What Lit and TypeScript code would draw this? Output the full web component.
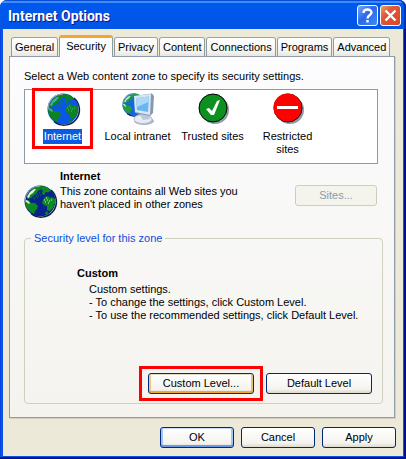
import { LitElement, html, css, svg } from "lit";
import { customElement, property } from "lit/decorators.js";
import { classMap } from "lit/directives/class-map.js";

const tabs = ["General", "Security", "Privacy", "Content", "Connections", "Programs", "Advanced"];

const zones = [
  { icon: "internet", label: "Internet", selected: true },
  { icon: "intranet", label: "Local intranet", selected: false },
  { icon: "trusted", label: "Trusted sites", selected: false },
  { icon: "restricted", label: "Restricted sites", selected: false },
];

const globe = (sea: string, land: string, lit: string) => svg`
  <circle cx="16" cy="16" r="15.500" fill=${sea}/>
  <path d="M3 10L6 6 10 3 15 1 18 1 17 4 14 6 12 9 9 11 7 13 3 14z" fill=${land}/>
  <path d="M18 1L23 2 27 6 26 8 22 7 20 10 17 9 19 6 17 4z" fill=${land}/>
  <path d="M12 10l3-3 3 1 1 3-3 2-2 3-3-2z" fill=${sea}/>
  <path d="M13 9h1M15 8h1M12 11h1M14 11h1M16 10h1M13 13h1M11 12h1M9 13h1M10 14h1" stroke=${land}/>
  <path d="M1 16L5 15 7 18 11 18 14 21 13 24 11 26 10 29C5 27 1 22 1 17z" fill=${land}/>
  <path d="M3 12l3-5 4-3 2 0-3 4-3 2-1 3z" fill=${lit}/>
  <path d="M1 16l2-1 3 3-1 1z" fill=${lit}/>
  <path d="M26 6l3 4 1 4-3-2-3-4z" fill=${sea}/>
  <path d="M19 15L21 12 24 11 26 13 28 12 31 14 31 18 29 23 26 26 23 25 23 21 20 20 18 18z" fill=${land}/>
  <path d="M20 15h1M22 13h1M23 15h1M21 17h1M25 16h1M27 15h1M24 18h1" stroke=${lit}/>
  <path d="M21 28l2-2 1 2-2 2z" fill=${land}/>
  <path d="M1 16A15 15 0 0 1 16 1" fill="none" stroke="#9fb2b8" stroke-width="1"/>
  <path d="M27 5A15 15 0 0 1 7 28.500" fill="none" stroke="#082048" stroke-width="1.500"/>`;

const icons: Record<string, unknown> = {
  internet: globe("#0a56e8", "#0c8420", "#4eb0a0"),
  zone: globe("#08248c", "#0c8a20", "#e0f2e4"),
  intranet: svg`
    <g transform="scale(.72)">${globe("#1468dc", "#269c3c", "#b8e8ea")}</g>
    <ellipse cx="22" cy="28" rx="10" ry="4" fill="#aab4c4"/>
    <ellipse cx="21" cy="26" rx="9" ry="4.500" fill="#e9edf3" stroke="#b5c1d2"/>
    <path d="M18 22l9-1 1 5-7 1z" fill="#bcc9da"/>
    <path d="M12 3L30 0.500 32 3 31 20 28 23 13 20z" fill="#8798b4"/>
    <path d="M12 3L29 1 28 22 13 19z" fill="#d9e7f4"/>
    <path d="M14 5L27 3.500 26 19 15 17z" fill="#69b6ee"/>
    <path d="M14 5L27 3.500 26.500 9 15 14z" fill="#a9dafa"/>`,
  trusted: svg`
    <circle cx="18" cy="17" r="14" fill="#8c9ba8"/>
    <circle cx="16" cy="15" r="14" fill="#0c9020" stroke="#000"/>
    <path d="M9 16l3-1 3 3 5-10 3-1-6 15h-3z" fill="#fff"/>`,
  restricted: svg`
    <circle cx="18" cy="17" r="14" fill="#8c9ba8"/>
    <circle cx="16" cy="15" r="14" fill="#fe0000" stroke="#000"/>
    <circle cx="15.500" cy="14.500" r="14" fill="#fe0000"/>
    <rect x="5" y="13" width="21" height="3" fill="#fff"/>`,
};

@customElement("zone-icon")
export class ZoneIcon extends LitElement {
  @property() name = "internet";

  static styles = css`
    :host { display: block; width: 32px; height: 32px; }
    svg { display: block; overflow: visible; }
  `;

  render() {
    return html`<svg width="32" height="32" viewBox="0 0 32 32" aria-hidden="true">${icons[this.name]}</svg>`;
  }
}

@customElement("app-root")
export class AppRoot extends LitElement {
  static styles = css`
    * { box-sizing: border-box; }
    :host { display: block; font: 11px/13px "Liberation Sans", Arial, sans-serif; color: #000; }
    button { font: inherit; color: inherit; margin: 0; padding: 0; }
    h1, h2, p, ul { margin: 0; padding: 0; }

    .window {
      background: linear-gradient(90deg, #0831d9 0, #0855e8 1px, #0855e8 calc(100% - 3px), #0855e8 calc(100% - 2px), #00138c calc(100% - 2px));
      border-radius: 7px 7px 0 0;
      padding: 0 3px;
      border-bottom: 2px solid #00138c;
    }
    .titlebar {
      display: flex;
      align-items: center;
      gap: 2px;
      height: 29px;
      margin: 0 -3px;
      padding: 2px 5px 0 8px;
      border-radius: 7px 7px 0 0;
      background: linear-gradient(#0a4cd8 0, #0a4cd8 1px, #3a8cf8 1px, #3a8cf8 3px, #0058ee 3px, #0055e5 100%);
      box-shadow: inset -2px 0 0 #0034b8;
    }
    .title { flex: 1; font: bold 14px/20px Roboto, sans-serif; color: #fff; text-shadow: 1px 1px 0 #0a1883; }
    .caption { width: 21px; height: 21px; border: 1px solid #fff; border-radius: 3px; }
    .caption svg { display: block; }
    .help { background: linear-gradient(135deg, #7aa8f8, #2c68e8 45%, #3c8cf8); }
    .close { background: linear-gradient(135deg, #f0a060, #e0583a 35%, #d84828); }

    .body { background: #ece9d8; padding: 6px 7px 8px 6px; border-bottom: 1px solid #0855e8; }
    .tabs { display: flex; align-items: flex-end; gap: 1px; height: 21px; padding-left: 2px; }
    .tab {
      height: 19px;
      padding: 0 3px;
      border: 1px solid #919b9c;
      border-top-color: #90a8b4;
      border-bottom: 0;
      border-radius: 3px 3px 0 0;
      background: linear-gradient(#fff, #f4f3ee 75%, #e8e6dc);
      white-space: nowrap;
    }
    .tab.active {
      position: relative;
      height: 22px;
      margin-bottom: -1px;
      padding: 0 6px 2px;
      border-top: 3px solid #f0a630;
      background: #fcfcfe;
    }
    .panel {
      margin-right: 1px;
      padding: 13px 11px 13px 14px;
      border: 1px solid #919ba8;
      background: linear-gradient(#fcfcfe, #f4f3ee);
      box-shadow: 1px 1px 0 #d4d0bf;
    }
    .zones {
      display: flex;
      align-items: flex-start;
      min-height: 75px;
      margin: 6px 5px 6px 0;
      border: 1px solid #8b9aa8;
      background: #fff;
      list-style: none;
    }
    .zone {
      position: relative;
      display: flex;
      flex-direction: column;
      align-items: center;
      gap: 4px;
      width: 75px;
      padding: 3px 2px;
      border: 0;
      background: none;
    }
    .zone span { padding: 1px; }
    .zone.active span { background: #0a5be0; color: #fff; }
    .marked { position: relative; }
    .marked::after { content: ""; position: absolute; border: 3px solid #fe0000; pointer-events: none; }
    .zone.marked::after { inset: -2px 7px; }
    .button.marked::after { inset: -8px -10px; }

    .summary { display: grid; grid-template-columns: 32px 1fr 82px; column-gap: 4px; margin-right: 6px; }
    .summary h2 { grid-column: 2 / 4; padding-bottom: 2px; }
    h2 { font: bold 11px/13px "Liberation Sans", Arial, sans-serif; }

    .level { min-width: 0; margin: 15px 0 0; padding: 22px 10px 9px 52px; border: 1px solid #d0d0bf; border-radius: 4px; }
    .level legend { margin-left: -46px; padding: 0 3px; color: #0b4fdc; }
    .level p { margin: 3px 0 0 12px; }
    .actions { display: flex; justify-content: flex-end; gap: 12px; margin-top: 51px; }
    .footer { display: flex; justify-content: flex-end; gap: 7px; margin-top: 9px; }

    .button {
      height: 21px;
      width: 74px;
      border: 1px solid #00287c;
      border-radius: 3px;
      background: linear-gradient(#fff, #f4f3ee 80%, #dcd8cc);
    }
    .wide { width: 106px; }
    .full { width: 100%; }
    .button:disabled { border-color: #cfcdb8; background: #f4f3ec; color: #8a9aac; }
    .hot { box-shadow: inset 0 1px 0 #e4dcc8, inset 0 -2px 0 #f0a830, inset 2px 0 0 #ecc888, inset -2px 0 0 #ecc070; }
    .default { box-shadow: inset 0 1px 0 #c4dcfa, inset 0 -2px 0 #6a98ea, inset 2px 0 0 #a4c4f4, inset -2px 0 0 #a4c4f4; }
  `;

  render() {
    return html`
      <div class="window">
        <header class="titlebar">
          <h1 class="title">Internet Options</h1>
          <button class="caption help" aria-label="Help">
            <svg width="19" height="19" viewBox="0 0 19 19" fill="none" stroke="#fff" stroke-width="2.400">
              <path d="M5.500 7C5.500 2.500 13.500 2.500 13.500 6.500C13.500 9 9.500 9 9.500 12.500M9.500 14v2.500" />
            </svg>
          </button>
          <button class="caption close" aria-label="Close">
            <svg width="19" height="19" viewBox="0 0 19 19" fill="none" stroke="#fff" stroke-width="2.400">
              <path d="M4.500 4.500l10 10M14.500 4.500l-10 10" />
            </svg>
          </button>
        </header>
        <main class="body">
          <div class="tabs" role="tablist">
            ${tabs.map((t) => html`<button role="tab" aria-selected=${t === "Security"} class=${classMap({ tab: true, active: t === "Security" })}>${t}</button>`)}
          </div>
          <section class="panel" role="tabpanel">
            <p>Select a Web content zone to specify its security settings.</p>
            <ul class="zones">
              ${zones.map((z) => html`
                <li>
                  <button class=${classMap({ zone: true, active: z.selected, marked: z.selected })} aria-pressed=${z.selected}>
                    <zone-icon name=${z.icon}></zone-icon><span>${z.label}</span>
                  </button>
                </li>`)}
            </ul>
            <div class="summary">
              <h2>Internet</h2>
              <zone-icon name="zone"></zone-icon>
              <p>This zone contains all Web sites you<br />haven't placed in other zones</p>
              <button class="button full" disabled>Sites...</button>
            </div>
            <fieldset class="level">
              <legend>Security level for this zone</legend>
              <h2>Custom</h2>
              <p>Custom settings.<br />- To change the settings, click Custom Level.<br />- To use the recommended settings, click Default Level.</p>
              <div class="actions">
                <button class="button wide hot marked">Custom Level...</button>
                <button class="button wide">Default Level</button>
              </div>
            </fieldset>
          </section>
          <footer class="footer">
            <button class="button default">OK</button>
            <button class="button">Cancel</button>
            <button class="button">Apply</button>
          </footer>
        </main>
      </div>
    `;
  }
}
